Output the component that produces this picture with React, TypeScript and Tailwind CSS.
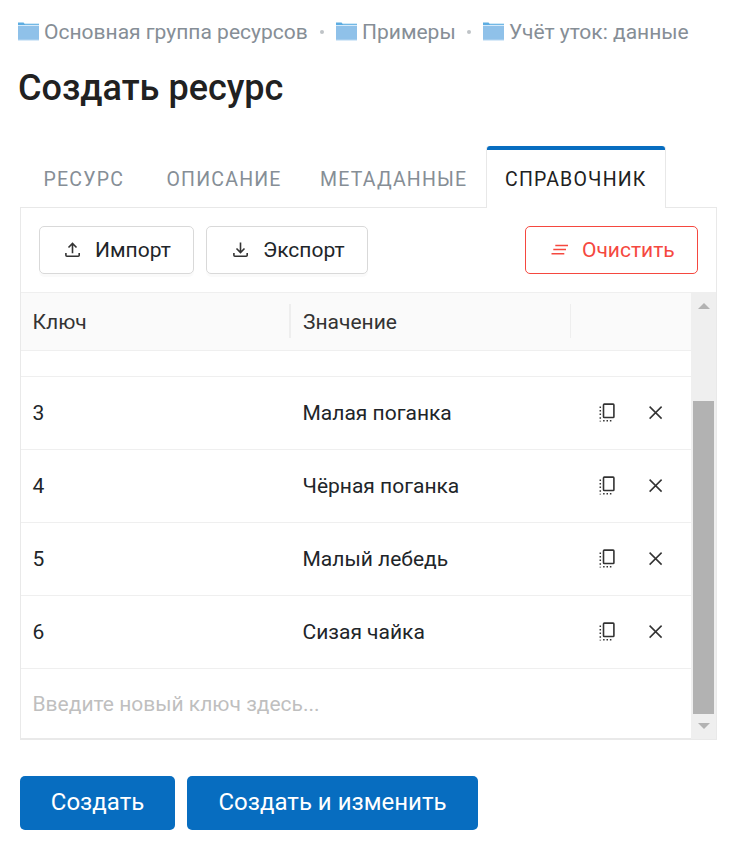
const rows = [
  { key: '3', value: 'Малая поганка' },
  { key: '4', value: 'Чёрная поганка' },
  { key: '5', value: 'Малый лебедь' },
  { key: '6', value: 'Сизая чайка' },
];

function FolderIcon() {
  return (
    <svg width="21" height="19" viewBox="0 0 21 19" className="mr-[5px] mb-[2px] shrink-0">
      <path d="M0 .5h5.5l1.5 1.5h14v2H0z" fill="#5dade2" />
      <path d="M7 1.5h14v.8H7z" fill="#a5d3ee" />
      <rect y="3" width="21" height="1" fill="#d5eafa" />
      <rect y="4" width="21" height="14" fill="#8fc1e9" />
      <rect y="17.6" width="21" height="1" fill="#c0dcf3" />
    </svg>
  );
}

function Crumb({ text, width }: { text: string; width: string }) {
  return (
    <div className={`flex items-center ${width}`}>
      <FolderIcon />
      <span className="whitespace-nowrap">{text}</span>
    </div>
  );
}

function TransferIcon({ up }: { up: boolean }) {
  return (
    <svg width="16" height="16" viewBox="0 0 16 16" fill="none" stroke="#333" strokeWidth="1.6">
      <path d={up ? 'M7.5 11.3V1.8M3.5 5.5l4-4 4 4' : 'M7.5 .5V10M3.5 6.5l4 4 4-4'} />
      <path d="M.9 11v2.2q0 1 1 1h11.3q1 0 1-1V11" />
    </svg>
  );
}

function ClearIcon() {
  return (
    <svg width="18" height="12" viewBox="0 0 18 12" stroke="#f5483f" strokeWidth="1.5">
      <path d="M4.3 1.4H17M2.3 5.6H15M.5 9.8h12.8" />
    </svg>
  );
}

function FrontIcon() {
  return (
    <svg width="18" height="20" viewBox="0 0 18 20" fill="none" stroke="#333">
      <rect x="4.5" y="1.1" width="10.4" height="13.4" rx="0.8" strokeWidth="1.6" />
      <path d="M1.3 3.5v14.9" strokeWidth="1.5" strokeDasharray="1.5 2.05" />
      <path d="M4.1 17.8h8.6" strokeWidth="1.5" strokeDasharray="1.5 1.9" />
    </svg>
  );
}

function CloseIcon() {
  return (
    <svg width="14" height="14" viewBox="0 0 14 14" fill="none" stroke="#333" strokeWidth="1.5">
      <path d="m.6 .6 12 12M12.6 .6l-12 12" />
    </svg>
  );
}

export default function App() {
  return (
    <main className="h-[846px] w-[735px] overflow-hidden bg-white font-['Roboto',sans-serif] text-[21px] text-[#212529]">
      <nav className="flex h-[64px] items-center pl-[18px] text-[21px] leading-none text-[#868e96]">
        <Crumb text="Основная группа ресурсов" width="w-[302px]" />
        <i className="mr-[12px] size-[4px] rounded-full bg-[#bfc3c7]" />
        <Crumb text="Примеры" width="w-[131px]" />
        <i className="mr-[12px] size-[4px] rounded-full bg-[#bfc3c7]" />
        <Crumb text="Учёт уток: данные" width="w-[220px]" />
      </nav>
      <h1 className="mt-[4px] h-[78px] pl-[18px] text-[36px] leading-[40px] font-medium text-[#212121]">Создать ресурс</h1>

      <div className="mx-[20px] mr-[18px] flex h-[62px] text-[19.5px] leading-[24px] tracking-[1.2px] text-[#868e96]">
        <div className="flex h-[62px] w-[466px] border-b border-[#e8e8e8] pt-[22px] pl-[23.5px]">
          <span className="w-[123px]">РЕСУРС</span>
          <span className="w-[153.5px]">ОПИСАНИЕ</span>
          <span className="whitespace-nowrap">МЕТАДАННЫЕ</span>
        </div>
        <div className="h-[62px] w-[180px] rounded-t-[3px] border-x border-[#e8e8e8] text-[#212121]">
          <div className="h-[4px] rounded-t-[3px] bg-[#076dc0]" />
          <div className="pt-[18px] pl-[18px]">СПРАВОЧНИК</div>
        </div>
        <div className="flex-1 border-b border-[#e8e8e8]" />
      </div>

      <section className="ml-[20px] h-[532px] w-[697px] border-x border-b-2 border-[#e9e9e9]">
        <div className="flex h-[84px] items-start px-[18px] pt-[18px] leading-none">
          <button className="mr-[12px] flex h-[48px] w-[155px] items-center rounded-[5px] border border-[#d9d9d9] pl-[25px] shadow-[0_3px_0_rgba(0,0,0,0.02)]">
            <TransferIcon up={true} />
            <span className="ml-[14px]">Импорт</span>
          </button>
          <button className="flex h-[48px] w-[162px] items-center rounded-[5px] border border-[#d9d9d9] pl-[26px] shadow-[0_3px_0_rgba(0,0,0,0.02)]">
            <TransferIcon up={false} />
            <span className="ml-[14px]">Экспорт</span>
          </button>
          <button className="ml-auto flex h-[48px] w-[173px] items-center rounded-[5px] border border-[#f5483f] pl-[25px] text-[#f5483f]">
            <ClearIcon />
            <span className="ml-[13px]">Очистить</span>
          </button>
        </div>
        <div className="flex h-[446px]">
          <div className="w-[670px] border-t border-[#efefef]">
            <div className="flex h-[58px] items-center border-b border-[#efefef] bg-[#fafafa] pl-[11.5px] text-[21px] text-[#333]">
              <span className="w-[256.5px] pt-[2px]">Ключ</span>
              <i className="mb-[2px] h-[34px] w-[2px] bg-[#eeeeee]" />
              <span className="w-[279px] pt-[2px] pl-[12px]">Значение</span>
              <i className="mb-[2px] h-[34px] w-px bg-[#eeeeee]" />
            </div>
            <div className="h-[26px] border-b border-[#efefef]" />
            {rows.map((row) => (
              <div key={row.key} className="flex h-[73px] items-center border-b border-[#efefef] pl-[11.5px] text-[21px]">
                <span className="w-[270px] pt-[2px]">{row.key}</span>
                <span className="w-[296.5px] pt-[2px] whitespace-nowrap">{row.value}</span>
                <FrontIcon />
                <span className="ml-[32px]"><CloseIcon /></span>
              </div>
            ))}
            <div className="flex h-[69px] items-center pt-[3px] pl-[11.5px] text-[21px] text-[#bfbfbf]">Введите новый ключ здесь...</div>
          </div>
          <div className="-mb-px flex w-[25px] flex-col items-center bg-[#efefef]">
            <svg width="12" height="6" viewBox="0 0 12 6" className="mt-[11px]"><path d="M6 0 12 6H0z" fill="#b2b2b2" /></svg>
            <div className="mt-[92px] h-[313px] w-[21px] bg-[#b2b2b2]" />
            <svg width="12" height="6" viewBox="0 0 12 6" className="mt-[9px]"><path d="M0 0h12L6 6z" fill="#b2b2b2" /></svg>
          </div>
        </div>
      </section>

      <footer className="mt-[36px] ml-[20px] flex gap-[12px] text-[24px] leading-[52px] text-white">
        <button className="h-[54px] w-[155px] rounded-[5px] bg-[#076dc0] pb-[2px]">Создать</button>
        <button className="h-[54px] w-[291px] rounded-[5px] bg-[#076dc0] pb-[2px]">Создать и изменить</button>
      </footer>
    </main>
  );
}
